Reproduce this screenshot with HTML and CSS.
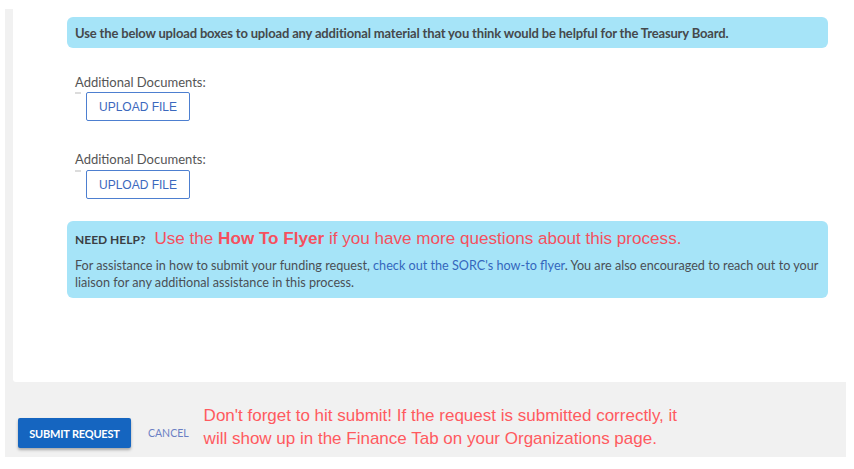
FILE: index.html
```html
<!DOCTYPE html>
<html>
<head>
<meta charset="utf-8">
<link rel="stylesheet" href="styles.css">
</head>
<body>
<div class="page">
  <div class="panel">
    <div class="card">
      <div class="info">Use the below upload boxes to upload any additional material that you think would be helpful for the Treasury Board.</div>
      <div class="upload first">
        <div class="label">Additional Documents:</div>
        <div class="row"><span class="dash"></span><button class="upbtn">UPLOAD FILE</button></div>
      </div>
      <div class="upload second">
        <div class="label">Additional Documents:</div>
        <div class="row"><span class="dash"></span><button class="upbtn">UPLOAD FILE</button></div>
      </div>
      <div class="help">
        <div class="help-head"><span class="need">NEED HELP?</span><span class="note">Use the <b>How To Flyer</b> if you have more questions about this process.</span></div>
        <p class="help-body">For assistance in how to submit your funding request, <a class="link">check out the SORC's how-to flyer</a>. You are also encouraged to reach out to your liaison for any additional assistance in this process.</p>
      </div>
    </div>
    <div class="footer">
      <button class="submit">SUBMIT REQUEST</button>
      <button class="cancel">CANCEL</button>
      <div class="reminder">Don't forget to hit submit! If the request is submitted correctly, it<br>will show up in the Finance Tab on your Organizations page.</div>
    </div>
  </div>
</div>
</body>
</html>
```
FILE: styles.css
```css
html, body {
  margin: 0;
  padding: 0;
  background: #fff;
}
body {
  font-family: "Lato", "Open Sans", sans-serif;
  color: #4a4a4a;
}
.page {
  padding-top: 9px;
  padding-left: 5px;
  width: 841px;
}
.panel {
  background: #f1f1f1;
  padding-left: 8px;
}
.card {
  background: #fff;
  height: 373px;
  box-sizing: border-box;
  padding: 8px 18px 0 54px;
  border-bottom-left-radius: 3px;
}
.info {
  background: #a6e4f8;
  border-radius: 6px;
  height: 31px;
  display: flex;
  align-items: center;
  padding: 0 8px;
  font-size: 13px;
  font-weight: 700;
  color: #45494c;
  letter-spacing: -0.16px;
}
.upload {
  margin-left: 8px;
}
.upload.first {
  margin-top: 26px;
}
.upload.second {
  margin-top: 30px;
}
.label {
  font-size: 13px;
  line-height: 16px;
  color: #555;
}
.row {
  display: flex;
  align-items: flex-start;
  margin-top: 2px;
}
.second .row {
  margin-top: 3px;
}
.dash {
  width: 6px;
  height: 2px;
  background: #dcdcdc;
  margin-right: 5px;
}
.upbtn {
  width: 104px;
  height: 29px;
  border: 1px solid #4d7fd0;
  border-radius: 2px;
  background: #fff;
  color: #3b68bd;
  font-family: "Liberation Sans", Arial, sans-serif;
  font-size: 12px;
  padding: 0;
}
.help {
  margin-top: 22px;
  background: #a6e4f8;
  border-radius: 6px;
  height: 77px;
  box-sizing: border-box;
  padding: 8px 8px 0 8px;
}
.help-head {
  display: flex;
  align-items: baseline;
  height: 20px;
}
.need {
  font-size: 12px;
  font-weight: 700;
  color: #3a3f44;
  margin-right: 9px;
}
.note {
  font-family: "Liberation Sans", Arial, sans-serif;
  font-size: 17.1px;
  color: #f5505e;
}
.note b {
  font-weight: 700;
}
.help-body {
  margin: 8px 0 0 0;
  font-size: 12.65px;
  line-height: 17px;
  color: #4a4f55;
}
.link {
  color: #3467bd;
}
.footer {
  height: 75px;
  display: flex;
  align-items: flex-start;
  padding-left: 5px;
  padding-top: 36px;
  box-sizing: border-box;
}
.submit {
  width: 113px;
  height: 30px;
  background: #1565c0;
  color: #fff;
  border: none;
  border-radius: 2px;
  font-family: "Lato", "Open Sans", sans-serif;
  font-size: 11px;
  font-weight: 700;
  letter-spacing: -0.2px;
  box-shadow: 0 2px 3px rgba(0,0,0,0.3);
  padding: 0;
}
.cancel {
  margin-left: 17px;
  height: 30px;
  background: none;
  border: none;
  padding: 0;
  color: #6b7fc4;
  font-family: "Lato", "Open Sans", sans-serif;
  font-size: 10.5px;
  letter-spacing: 0;
}
.reminder {
  margin-left: 15px;
  margin-top: -14px;
  font-family: "Liberation Sans", Arial, sans-serif;
  font-size: 17px;
  line-height: 23px;
  color: #ff5a5f;
}
```
